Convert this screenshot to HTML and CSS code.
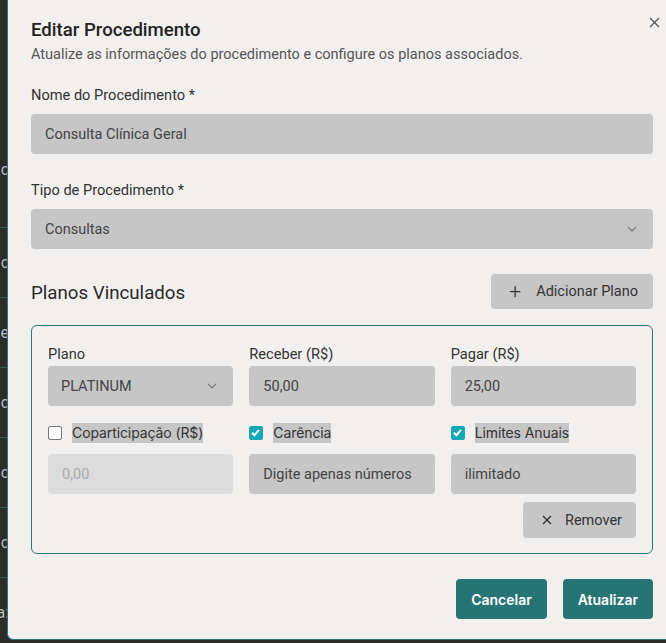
FILE: index.html
```html
<!DOCTYPE html>
<html lang="pt-BR">
<head>
<meta charset="utf-8">
<title>Editar Procedimento</title>
<link rel="stylesheet" href="styles.css">
</head>
<body>
<div class="backdrop">
  <div class="bg-row bg-first"><span class="bg-ch">c</span></div>
  <div class="bg-row"><span class="bg-ch">c</span></div>
  <div class="bg-row"><span class="bg-ch">e</span></div>
  <div class="bg-row"><span class="bg-ch">c</span></div>
  <div class="bg-row"><span class="bg-ch">c</span></div>
  <div class="bg-row"><span class="bg-ch">c</span></div>
  <div class="bg-row"><span class="bg-ch">a:</span></div>
</div>
<div class="modal">
  <button class="close" aria-label="Fechar">
    <svg width="11" height="11" viewBox="0 0 11 11"><path d="M1 1L10 10M10 1L1 10" stroke="#555" stroke-width="1.3" fill="none"/></svg>
  </button>
  <h1 class="title">Editar Procedimento</h1>
  <p class="subtitle">Atualize as informações do procedimento e configure os planos associados.</p>

  <div class="field">
    <label class="label">Nome do Procedimento *</label>
    <div class="input">Consulta Clínica Geral</div>
  </div>

  <div class="field field-second">
    <label class="label">Tipo de Procedimento *</label>
    <div class="input select">
      <span>Consultas</span>
      <svg class="chev" width="10" height="6" viewBox="0 0 10 6"><path d="M1 1L5 5L9 1" stroke="#777" stroke-width="1.1" fill="none"/></svg>
    </div>
  </div>

  <div class="section-head">
    <h2 class="section-title">Planos Vinculados</h2>
    <button class="btn-gray btn-add"><span class="btn-icon">+</span>Adicionar Plano</button>
  </div>

  <div class="card">
    <div class="grid">
      <div class="cell">
        <label class="label small">Plano</label>
        <div class="input select upper">
          <span>PLATINUM</span>
          <svg class="chev" width="10" height="6" viewBox="0 0 10 6"><path d="M1 1L5 5L9 1" stroke="#777" stroke-width="1.1" fill="none"/></svg>
        </div>
      </div>
      <div class="cell">
        <label class="label small">Receber (R$)</label>
        <div class="input">50,00</div>
      </div>
      <div class="cell">
        <label class="label small">Pagar (R$)</label>
        <div class="input">25,00</div>
      </div>
    </div>

    <div class="grid checks">
      <div class="cell">
        <div class="check-row"><span class="box"></span><span class="check-label">Coparticipação (R$)</span></div>
        <div class="input disabled">0,00</div>
      </div>
      <div class="cell">
        <div class="check-row"><span class="box on"><svg width="13" height="13" viewBox="0 0 13 13"><path d="M3 6.8L5.4 9.2L10 3.8" stroke="#fff" stroke-width="2" fill="none"/></svg></span><span class="check-label">Carência</span></div>
        <div class="input">Digite apenas números</div>
      </div>
      <div class="cell">
        <div class="check-row"><span class="box on"><svg width="13" height="13" viewBox="0 0 13 13"><path d="M3 6.8L5.4 9.2L10 3.8" stroke="#fff" stroke-width="2" fill="none"/></svg></span><span class="check-label">Limites Anuais</span></div>
        <div class="input">ilimitado</div>
      </div>
    </div>

    <div class="card-actions">
      <button class="btn-gray btn-remove"><svg class="x-icon" width="10" height="10" viewBox="0 0 10 10"><path d="M1 1L9 9M9 1L1 9" stroke="#333" stroke-width="1.4" fill="none"/></svg>Remover</button>
    </div>
  </div>

  <div class="footer">
    <button class="btn-teal">Cancelar</button>
    <button class="btn-teal">Atualizar</button>
  </div>
</div>
</body>
</html>
```

FILE: styles.css
```css
* { box-sizing: border-box; }
html, body { margin: 0; padding: 0; }
body {
  width: 666px;
  height: 643px;
  overflow: hidden;
  background: #2c2c2b;
  display: flex;
  align-items: flex-start;
  font-family: Roboto, "Liberation Sans", sans-serif;
  color: #2a2a2a;
}
.backdrop {
  width: 7px;
  flex: none;
  display: flex;
  flex-direction: column;
  padding-top: 135px;
}
.bg-row {
  height: 70px;
  border-bottom: 1px solid #3f5656;
  overflow: hidden;
  font-size: 16px;
  line-height: 20px;
  color: #bbb;
  display: flex;
  align-items: center;
  justify-content: flex-end;
}
.bg-first { height: 93px; align-items: flex-start; padding-top: 25px; }
.bg-ch { margin-right: -2px; }
.modal {
  position: relative;
  flex: none;
  width: 672px;
  height: 640px;
  background: #f1f0ef;
  border-left: 1px solid #2b7776;
  border-bottom: 1px solid #2b7776;
  border-bottom-left-radius: 6px;
  padding: 18px 19px 0 23px;
}
.close {
  position: absolute;
  left: 640px;
  top: 16px;
  width: 13px;
  height: 13px;
  padding: 0;
  border: 0;
  background: none;
  display: flex;
  align-items: center;
  justify-content: center;
}
.title {
  margin: 0;
  font-size: 18.6px;
  line-height: 24px;
  font-weight: 500;
  color: #222;
}
.subtitle {
  margin: 3px 0 0;
  font-size: 14.5px;
  line-height: 20px;
  color: #555;
}
.field { margin-top: 20px; width: 622px; }
.field-second { margin-top: 26px; }
.label {
  display: block;
  font-size: 14.6px;
  line-height: 20px;
  color: #333;
  margin-bottom: 9px;
}
.label.small { margin-bottom: 2px; }
.input {
  height: 40px;
  background: #c6c6c6;
  border-radius: 4px;
  padding: 0 14px;
  display: flex;
  align-items: center;
  justify-content: space-between;
  font-size: 14.5px;
  color: #444;
}
.input.upper { padding-left: 13px; }
.input.disabled { background: #dcdcdc; color: #aaa; }
.select .chev { flex: none; margin-right: 2px; }
.section-head {
  width: 622px;
  margin-top: 25px;
  display: flex;
  align-items: center;
  justify-content: space-between;
}
.section-title {
  margin: 2px 0 0;
  font-size: 18.7px;
  font-weight: 400;
  color: #2a2a2a;
}
.btn-gray {
  height: 35px;
  border: 0;
  border-radius: 4px;
  background: #c6c6c6;
  padding: 0 14px 0 15px;
  display: flex;
  align-items: center;
  font-family: Roboto, "Liberation Sans", sans-serif;
  font-size: 14.5px;
  color: #333;
}
.btn-add { padding: 0 15px 0 18px; }
.btn-icon {
  font-size: 21px;
  font-weight: 300;
  margin-right: 15px;
  line-height: 1;
}
.card {
  width: 622px;
  margin-top: 16px;
  border: 1px solid #2b7776;
  border-radius: 6px;
  padding: 18px 16px 15px 16px;
}
.grid {
  display: grid;
  grid-template-columns: repeat(3, 1fr);
  column-gap: 16px;
}
.checks { margin-top: 17px; }
.check-row {
  display: flex;
  align-items: center;
  height: 20px;
  margin-bottom: 11px;
}
.box {
  width: 14px;
  height: 14px;
  border: 1px solid #767676;
  border-radius: 2px;
  background: #fff;
  flex: none;
  margin-right: 10px;
  display: flex;
}
.box.on {
  background: #14a8b6;
  border-color: #14a8b6;
}
.box.on svg { margin: -1px; }
.check-label {
  background: #c6c6c6;
  font-family: Inter, "Noto Sans", sans-serif;
  font-size: 14px;
  line-height: 20px;
  color: #333;
  letter-spacing: -0.1px;
}
.card-actions {
  display: flex;
  justify-content: flex-end;
  margin-top: 8px;
}
.btn-remove { height: 36px; padding: 0 14px 0 19px; }
.x-icon { margin-right: 13px; }
.footer {
  width: 622px;
  margin-top: 25px;
  display: flex;
  justify-content: flex-end;
  gap: 16px;
}
.btn-teal {
  height: 40px;
  border: 0;
  border-radius: 4px;
  background: #267574;
  color: #fff;
  font-family: Inter, "Noto Sans", sans-serif;
  font-size: 14px;
  font-weight: 600;
  padding: 0 15px;
}
```
